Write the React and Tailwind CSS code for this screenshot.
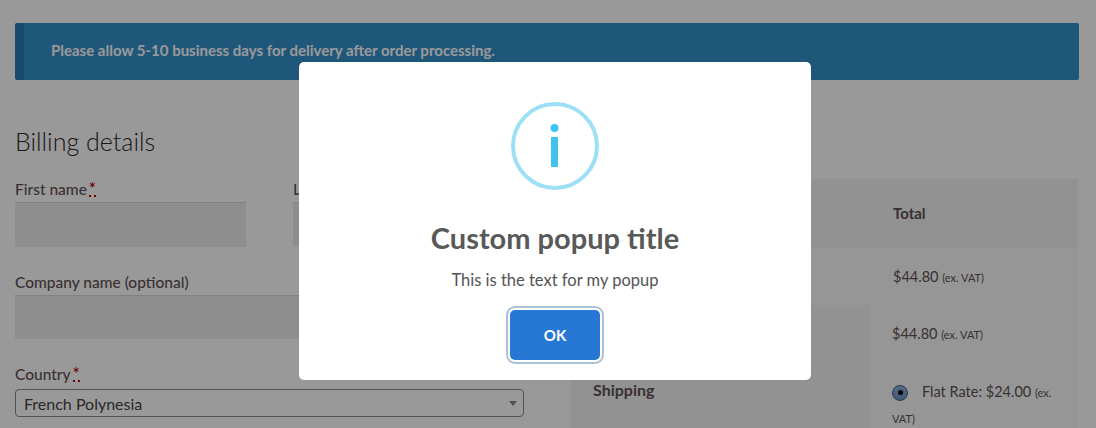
import React from "react";

function Required() {
  return <abbr className="inline-block ml-[2px] text-[17px] leading-[13px] text-[#b00] no-underline border-b-2 border-dotted border-[#b00]">*</abbr>;
}

function Label({ children, required, className = "" }) {
  return (
    <label className={"block text-[15.5px] leading-[20px] font-medium text-[#5f5252] " + className}>
      {children}
      {required && <Required />}
    </label>
  );
}

function Price({ className = "" }) {
  return (
    <div className={"text-[14.5px] leading-[20px] text-[#5f5252] " + className}>
      $44.80 <span className="text-[11px]">(ex. VAT)</span>
    </div>
  );
}

function Checkout() {
  return (
    <div className="h-[428px] overflow-hidden bg-white pt-[23px] pl-[15px] pr-[17px]">
      <div className="h-[57px] flex items-center bg-[#3592cd] border-l-[9px] border-[#2b7fb5] rounded-[2px] pl-[27px] pb-[3px]">
        <span className="text-white text-[15px] font-bold">Please allow 5-10 business days for delivery after order processing.</span>
      </div>

      <div className="flex gap-[46px]">
        <div className="w-[509px] shrink-0">
          <h3 className="mt-[43px] text-[25px] leading-[36px] font-light text-[#2b2b2b]">Billing details</h3>
          <div className="mt-[20px] flex gap-[47px]">
            <div className="w-[231px]">
              <Label required>First name</Label>
              <div className="mt-[3px] h-[45px] bg-[#ededed] border-t border-[#d8d8d8]" />
            </div>
            <div className="flex-1">
              <Label>Last name</Label>
              <div className="mt-[3px] h-[45px] bg-[#ededed] border-t border-[#d8d8d8]" />
            </div>
          </div>
          <Label className="mt-[25px]">Company name (optional)</Label>
          <div className="mt-[3px] h-[44px] bg-[#ededed] border-t border-[#d8d8d8]" />
          <Label required className="mt-[25px]">Country</Label>
          <div className="mt-[5px] h-[28px] flex items-center justify-between border border-[#8a8a8a] rounded-[4px] pl-[8px] pr-[6px] bg-white">
            <span className="text-[16px] text-[#444] pt-[2px]">French Polynesia</span>
            <span className="w-0 h-0 border-x-[4px] border-x-transparent border-t-[5px] border-t-[#888]" />
          </div>
        </div>

        <div className="mt-[99px] w-[508px] shrink-0 text-[#5f5252]">
          <div className="h-[69px] bg-[#f3f3f3] flex items-center pl-[323px]">
            <span className="text-[15px] font-bold">Total</span>
          </div>
          <div className="h-[57px] bg-[#fafafa] pl-[323px] pt-[19px]">
            <Price />
          </div>
          <div className="flex h-[123px]">
            <div className="w-[300px] bg-[#f3f3f3] pl-[23px] pt-[75px]">
              <span className="text-[16px] leading-[20px] font-bold block">Shipping</span>
            </div>
            <div className="flex-1 bg-[#fafafa] pl-[22px] pt-[19px]">
              <Price />
              <div className="mt-[37px] flex items-center">
                <span className="w-[16px] h-[16px] rounded-full bg-gradient-to-b from-[#8fb0d8] to-[#6d94c4] border border-[#3f5f8a] flex items-center justify-center">
                  <span className="w-[5px] h-[5px] rounded-full bg-black" />
                </span>
                <span className="ml-[14px] text-[14.5px] leading-[20px]">
                  Flat Rate: $24.00 <span className="text-[11px]">(ex.</span>
                </span>
              </div>
              <div className="mt-[8px] text-[11px] leading-[16px]">VAT)</div>
            </div>
          </div>
        </div>
      </div>
    </div>
  );
}

function Popup() {
  return (
    <div className="absolute inset-0 bg-black/40 flex justify-center items-start pt-[62px] pl-[14px]">
      <div className="w-[512px] h-[318px] bg-white rounded-[5px] flex flex-col items-center pt-[40px]">
        <svg width="88" height="88" viewBox="0 0 88 88">
          <circle cx="44" cy="44" r="42" fill="none" stroke="#9de0f6" strokeWidth="4" />
          <circle cx="43.5" cy="26" r="4" fill="#3fc3ee" />
          <rect x="40" y="35" width="7" height="30" fill="#3fc3ee" />
        </svg>
        <h2 className="mt-[26px] text-[29px] leading-[44px] font-bold text-[#595959]">Custom popup title</h2>
        <p className="mt-[7px] text-[16.5px] leading-[26px] text-[#545454]">This is the text for my popup</p>
        <button className="mt-[17px] w-[90px] h-[50px] bg-[#2778d4] text-white text-[15px] font-bold rounded-[5px] shadow-[0_0_0_2px_#fff,0_0_0_4px_rgba(50,100,150,0.4)]">
          OK
        </button>
      </div>
    </div>
  );
}

export default function App() {
  return (
    <div className="relative w-[1096px] h-[428px] overflow-hidden font-['Lato',sans-serif]">
      <Checkout />
      <Popup />
    </div>
  );
}
